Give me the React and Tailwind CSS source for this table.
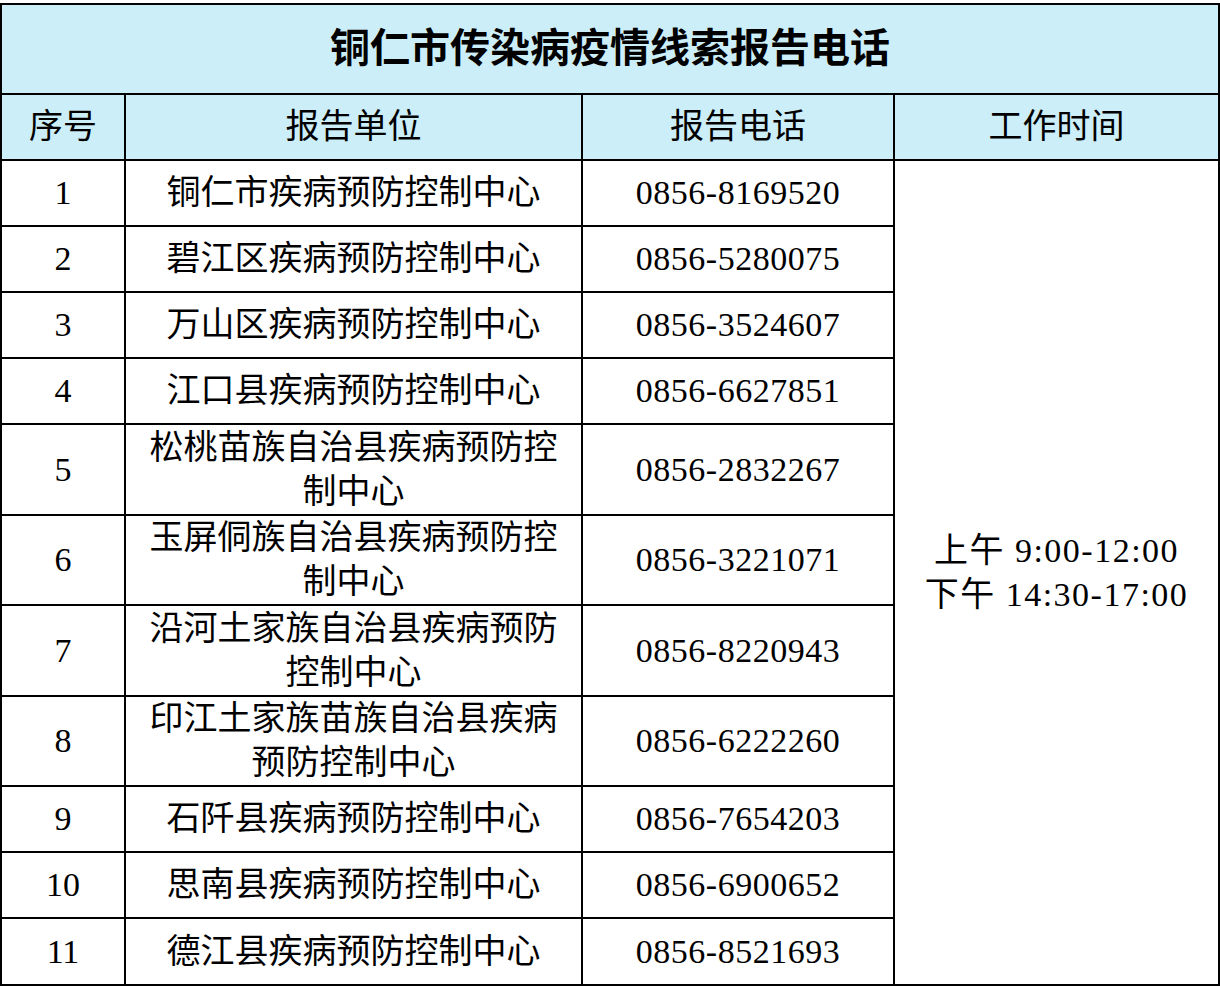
import React from "react";

const rows = [
  ["1", "铜仁市疾病预防控制中心", "0856-8169520", "h-[66px]"],
  ["2", "碧江区疾病预防控制中心", "0856-5280075", "h-[66px]"],
  ["3", "万山区疾病预防控制中心", "0856-3524607", "h-[66px]"],
  ["4", "江口县疾病预防控制中心", "0856-6627851", "h-[66px]"],
  ["5", "松桃苗族自治县疾病预防控制中心", "0856-2832267", "h-[91px]"],
  ["6", "玉屏侗族自治县疾病预防控制中心", "0856-3221071", "h-[90px]"],
  ["7", "沿河土家族自治县疾病预防控制中心", "0856-8220943", "h-[91px]"],
  ["8", "印江土家族苗族自治县疾病预防控制中心", "0856-6222260", "h-[90px]"],
  ["9", "石阡县疾病预防控制中心", "0856-7654203", "h-[66px]"],
  ["10", "思南县疾病预防控制中心", "0856-6900652", "h-[66px]"],
  ["11", "德江县疾病预防控制中心", "0856-8521693", "h-[67px]"],
];

const cell = "border-2 border-black text-center align-middle px-[10px] p-0";

export default function App() {
  return (
    <div
      className="w-[1220px] h-[986px] bg-white pt-[3px] text-black"
      style={{ fontFamily: '"Liberation Serif", "Noto Sans CJK SC", serif' }}
    >
      <table className="table-fixed border-collapse w-[1218px] text-[34px] leading-[44px]">
        <colgroup>
          <col className="w-[124px]" />
          <col className="w-[457px]" />
          <col className="w-[312px]" />
          <col className="w-[325px]" />
        </colgroup>
        <tbody>
          <tr className="h-[90px] bg-[#cceef9]">
            <td colSpan={4} className={`${cell} text-[40px] font-bold`}>
              铜仁市传染病疫情线索报告电话
            </td>
          </tr>
          <tr className="h-[66px] bg-[#cceef9]">
            <td className={cell}>序号</td>
            <td className={cell}>报告单位</td>
            <td className={cell}>报告电话</td>
            <td className={cell}>工作时间</td>
          </tr>
          {rows.map(([n, name, tel, h], i) => (
            <tr key={n} className={h}>
              <td className={cell}>{n}</td>
              <td className={cell}>{name}</td>
              <td className={`${cell} tracking-[0.5px]`}>{tel}</td>
              {i === 0 && (
                <td rowSpan={rows.length} className={`${cell} tracking-[1.5px]`}>
                  <div>上午 9:00-12:00</div>
                  <div>下午 14:30-17:00</div>
                </td>
              )}
            </tr>
          ))}
        </tbody>
      </table>
    </div>
  );
}
